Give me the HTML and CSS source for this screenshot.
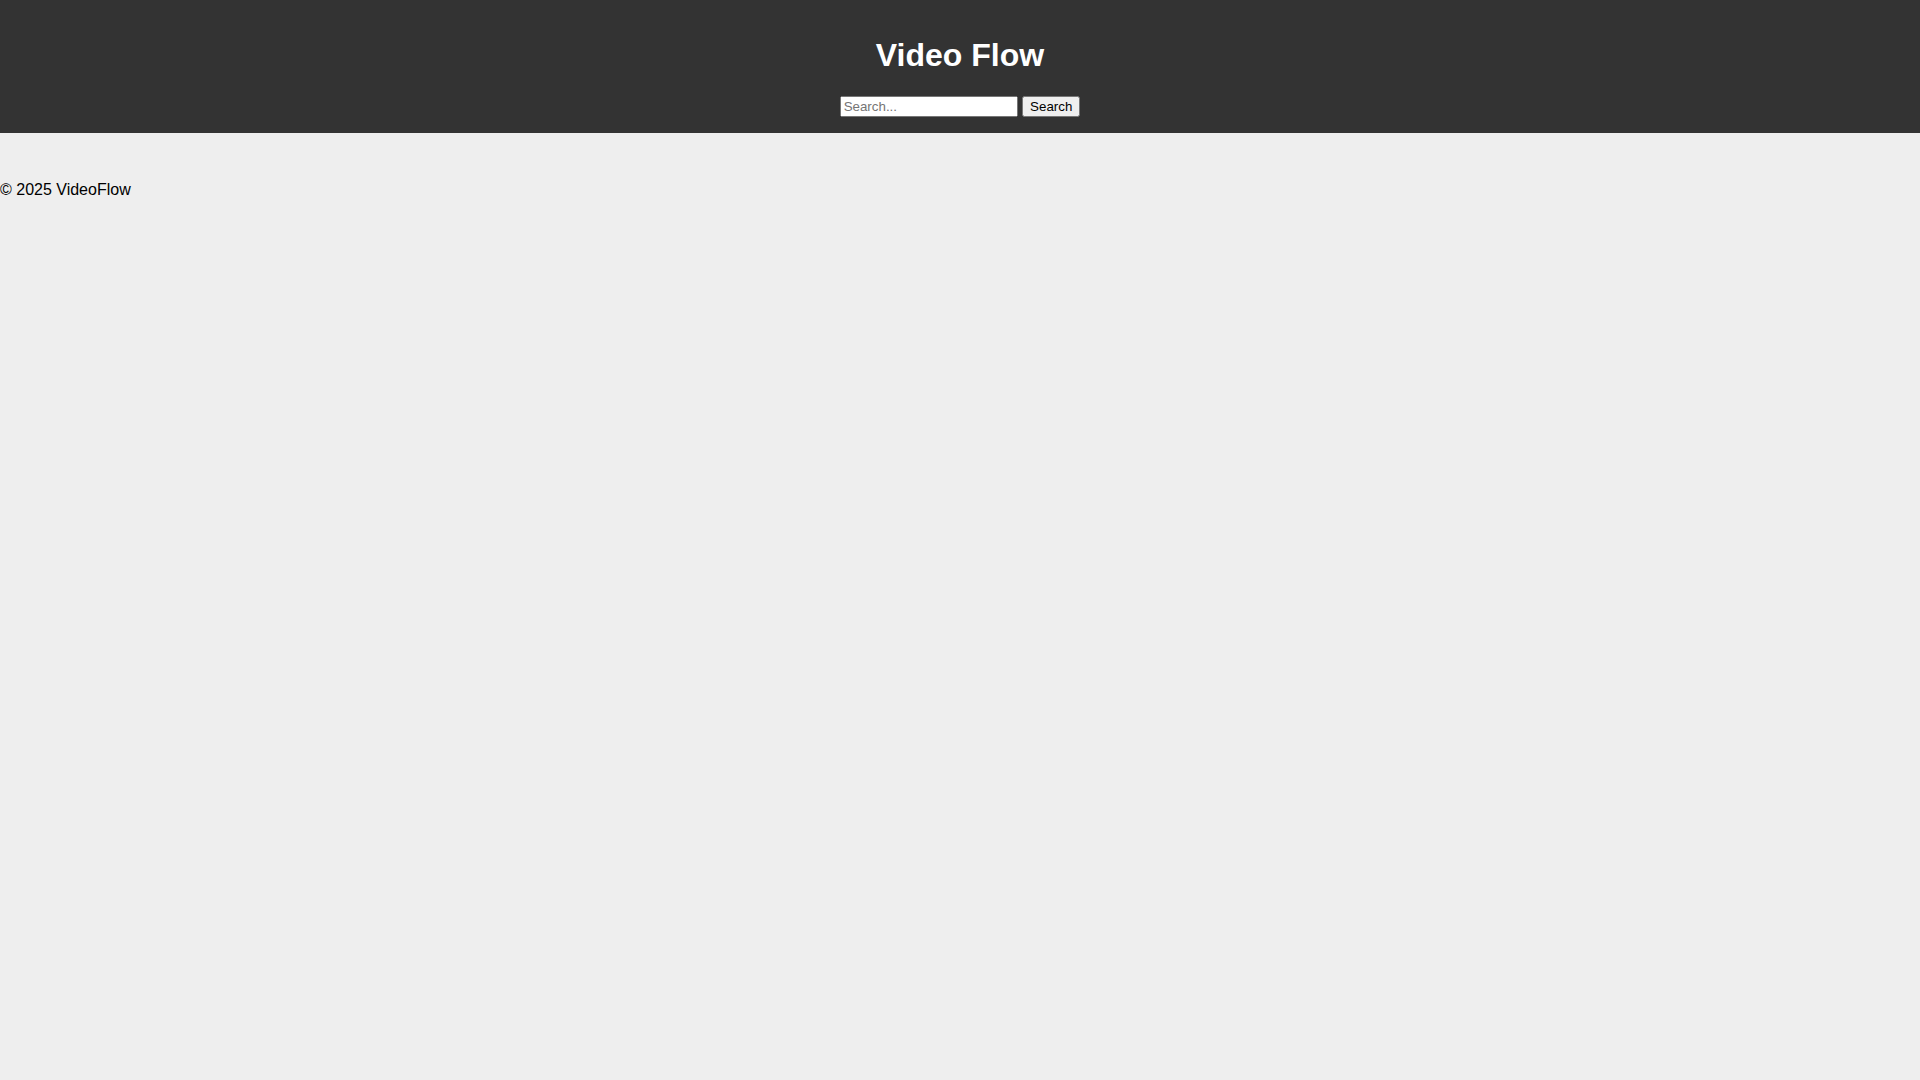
FILE: index.html
```html
<!DOCTYPE html>
<html lang="en">
<head>
<meta charset="utf-8">
<title>Video Flow</title>
<link rel="stylesheet" href="styles.css">
</head>
<body>
<header class="site-header">
  <h1 class="site-title">Video Flow</h1>
  <form class="search-form">
    <input class="search-input" type="text" placeholder="Search...">
    <button class="search-button" type="button">Search</button>
  </form>
</header>
<main class="content"></main>
<footer class="site-footer">
  <p class="copyright">&copy; 2025 VideoFlow</p>
</footer>
</body>
</html>
```

FILE: styles.css
```css
html, body {
  margin: 0;
  padding: 0;
}
body {
  background: #eeeeee;
  font-family: "Liberation Sans", Arial, sans-serif;
  color: #000;
}
.site-header {
  background: #333333;
  color: #ffffff;
  padding: 16px;
  text-align: center;
}
.site-title {
  font-size: 32px;
  margin: 21.44px 0;
  font-weight: bold;
}
.search-form {
  margin: 0;
}
.search-input,
.search-button {
  font-family: "Liberation Sans", Arial, sans-serif;
  font-size: 13.333px;
}
.search-input {
  box-sizing: border-box;
  width: 178px;
}
.content {
  padding: 16px;
}
.copyright {
  margin: 16px 0;
}
```
